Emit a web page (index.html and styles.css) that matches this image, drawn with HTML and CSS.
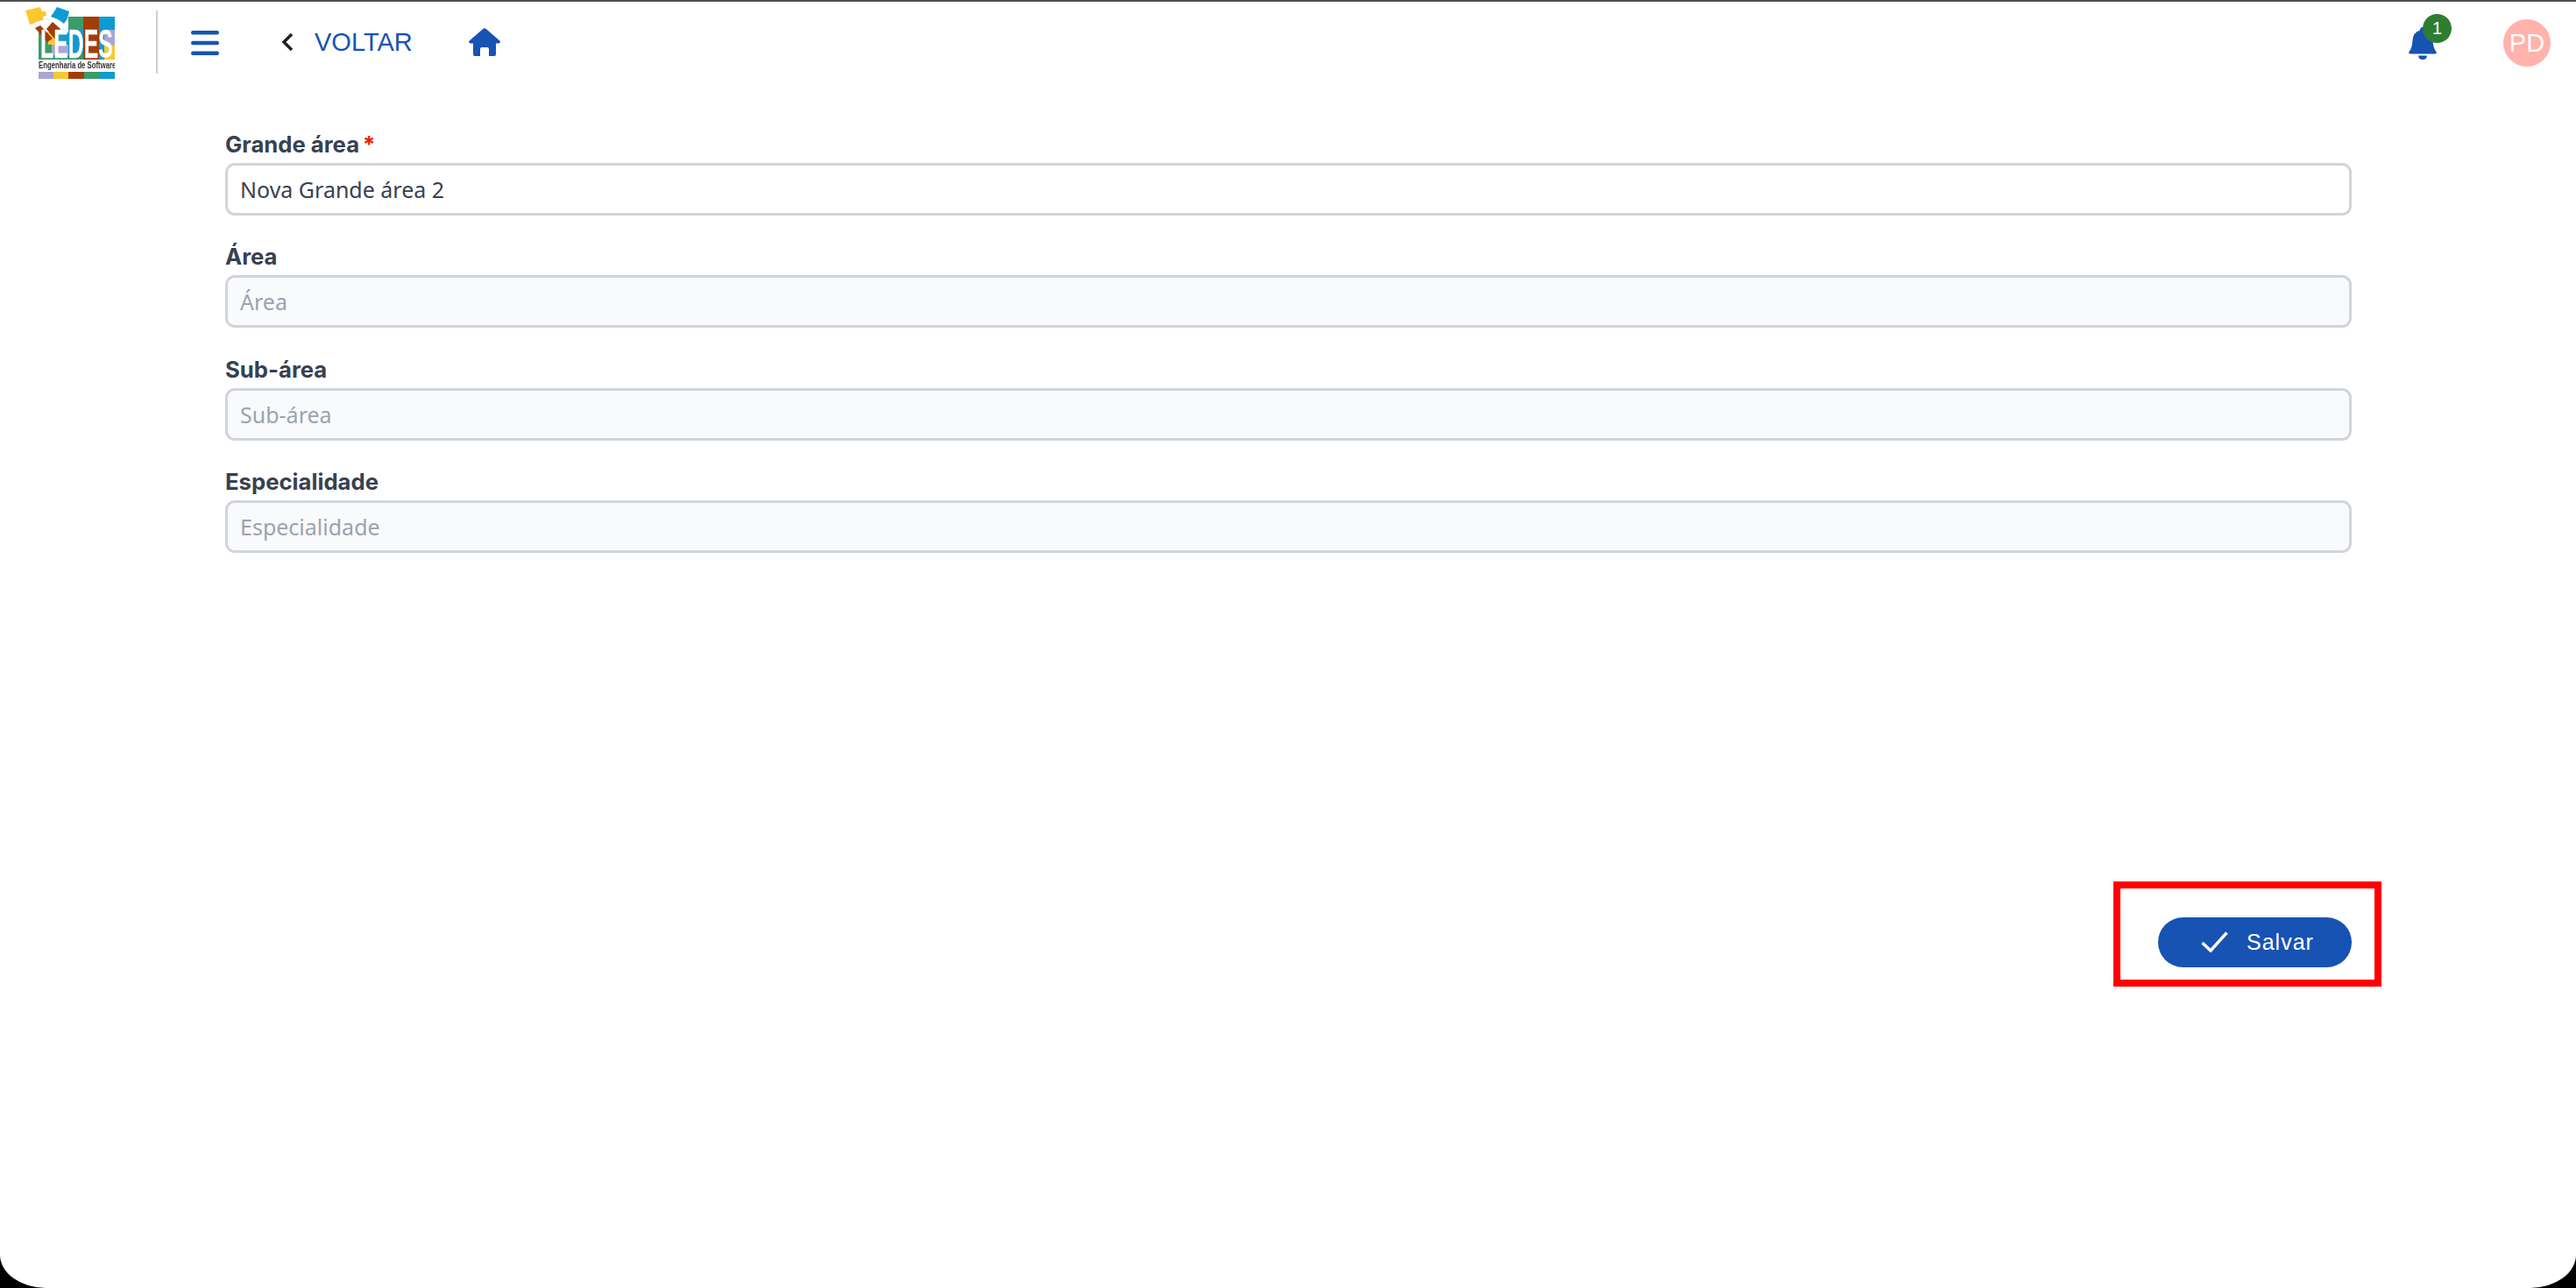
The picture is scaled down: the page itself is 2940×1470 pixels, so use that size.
FILE: index.html
```html
<!DOCTYPE html>
<html lang="pt-BR">
  <head>
    <meta charset="UTF-8" />
    <title>Grande área</title>
    <link rel="stylesheet" href="styles.css">
  </head>
  <body>
    <div class="screen">
      <header class="topbar">
        <svg class="logo" viewBox="0 0 102 82" aria-label="LEDES">
          <g class="logo-art">
            <rect x="15" y="11" width="87" height="50" fill="#3a9b6b" />
            <rect x="15" y="11" width="34" height="18" fill="#fff" />
            <rect x="26" y="29" width="12" height="14" fill="#f9c82f" />
            <rect x="38" y="29" width="11" height="14" fill="#0e9bd3" />
            <rect x="30" y="43" width="20" height="12" fill="#a9a6d6" />
            <rect x="66" y="11" width="18" height="50" fill="#a33c08" />
            <rect x="84" y="11" width="18" height="50" fill="#0e9bd3" />
            <rect x="49" y="26" width="17" height="28" fill="#0e9bd3" />
            <rect x="90" y="26" width="12" height="18" fill="#a9a6d6" />
            <rect x="90" y="44" width="12" height="17" fill="#f9c82f" />
            <path d="M0 4 L17 0 L19 5 L23 5 L24 10 L20 11 L21 16 L5 20 Z" fill="#f9c82f" />
            <path d="M33 5 L36 0 L50 5 L49 9 L48 13 L44 19 L37 14 L29 11 Z" fill="#0e9bd3" />
            <path d="M10 18 L25 13 L34 22 L24 30 L14 27 Z" fill="#fff" stroke="#ddd" stroke-width=".8" />
            <path d="M24 25 L31 17 L40 25 L38 31 L33 36 Z" fill="#a33c08" />
            <path d="M11 24 L17 21 L31 36 L25 40 Z" fill="#a33c08" />
            <text class="logo-name" transform="translate(17 58) scale(.54 1)" stroke="#ddd" stroke-width=".4">LEDES</text>
            <rect x="15" y="60" width="87" height="13" fill="#fff" />
            <text class="logo-sub" transform="translate(15 70) scale(.74 1)">Engenharia de Software</text>
            <rect x="15" y="74" width="17" height="8" fill="#a9a6d6" />
            <rect x="32" y="74" width="17" height="8" fill="#f9c82f" />
            <rect x="49" y="74" width="18" height="8" fill="#a33c08" />
            <rect x="67" y="74" width="17" height="8" fill="#3a9b6b" />
            <rect x="84" y="74" width="18" height="8" fill="#0e9bd3" />
          </g>
        </svg>
        <span class="divider"></span>
        <button class="icon-btn menu-btn" aria-label="Menu">
          <svg width="32" height="28" viewBox="0 0 32 28">
            <rect y="0" width="32" height="4.5" rx="2.2" />
            <rect y="11.7" width="32" height="4.5" rx="2.2" />
            <rect y="23.5" width="32" height="4.5" rx="2.2" />
          </svg>
        </button>
        <a class="back-link" href="#">
          <svg class="back-icon" width="14" height="22" viewBox="0 0 14 22">
            <path d="M12 2 L3 11 L12 20" />
          </svg>
          VOLTAR
        </a>
        <svg class="home-icon" width="36" height="32" viewBox="0 0 36 32">
          <path d="M16.5 .7 Q18 -.3 19.5 .7 L35.3 14.5 Q37 16.8 34 17.5 L31 17.5 L31 30 Q31 32 29 32 L23 32 L23 24 Q23 22 21 22 L15 22 Q13 22 13 24 L13 32 L7 32 Q5 32 5 30 L5 17.5 L2 17.5 Q-1 16.8 .7 14.5 Z" />
        </svg>
        <div class="topbar-right">
          <div class="bell">
            <svg width="32" height="37" viewBox="0 0 32 37">
              <path d="M16 0 Q19 0 19 3.500 Q27 6 27.500 15 Q28 24 31.500 28 Q32.500 30.500 30 30.500 L2 30.500 Q-.5 30.500 .5 28 Q4 24 4.500 15 Q5 6 13 3.500 Q13 0 16 0 Z" />
              <path d="M11 32.500 L21 32.500 Q20.500 37 16 37 Q11.500 37 11 32.500 Z" />
            </svg>
            <span class="badge">1</span>
          </div>
          <span class="avatar">PD</span>
        </div>
      </header>

      <main class="content">
        <form class="area-form">
          <div class="field">
            <label for="grande">Grande área<span class="required">*</span></label>
            <input id="grande" type="text" value="Nova Grande área 2" />
          </div>
          <div class="field">
            <label for="area">Área</label>
            <input id="area" type="text" placeholder="Área" disabled />
          </div>
          <div class="field">
            <label for="sub">Sub-área</label>
            <input id="sub" type="text" placeholder="Sub-área" disabled />
          </div>
          <div class="field">
            <label for="esp">Especialidade</label>
            <input id="esp" type="text" placeholder="Especialidade" disabled />
          </div>
        </form>

        <div class="actions">
          <div class="highlight">
            <button class="save-btn" type="button">
              <svg width="31" height="24" viewBox="0 0 31 24">
                <path d="M1.500 13 L11 22 L29.500 1.500" />
              </svg>
              Salvar
            </button>
          </div>
        </div>
      </main>
    </div>
  </body>
</html>
```

FILE: styles.css
```css
* {
  box-sizing: border-box;
}
html,
body {
  margin: 0;
  height: 100%;
  background: #000;
}
body {
  font-family: "Liberation Sans", Arial, sans-serif;
  overflow: hidden;
}
.screen {
  height: 1470px;
  background: #fff;
  border-top: 2px solid #4d4f50;
  border-radius: 0 0 52px 52px / 0 0 38px 38px;
  overflow: hidden;
}

/* top bar */
.topbar {
  display: flex;
  align-items: center;
  height: 94px;
  padding: 6px 29px 0 29px;
}
.logo {
  width: 102px;
  height: 82px;
  flex: none;
  margin-top: -6px;
}
.logo-art {
  filter: blur(0.4px);
}
.logo-name {
  font-family: "Liberation Sans", sans-serif;
  font-weight: 700;
  font-size: 46px;
  fill: #fff;
}
.logo-sub {
  font-family: "Liberation Sans", sans-serif;
  font-weight: 700;
  font-size: 10.5px;
  fill: #333;
}
.divider {
  width: 2px;
  height: 72px;
  margin: -8px 38px 0 47px;
  background: #d0d0d0;
}
.icon-btn {
  padding: 0;
  border: 0;
  background: none;
  display: flex;
}
.menu-btn {
  margin-top: -7px;
}
.menu-btn svg {
  fill: #1753b3;
}
.back-link {
  display: flex;
  align-items: center;
  gap: 24px;
  margin: -8px 0 0 71px;
  font-size: 29px;
  color: #1753b3;
  text-decoration: none;
}
.back-icon {
  fill: none;
  stroke: #222;
  stroke-width: 3.500;
}
.home-icon {
  margin: -8px 0 0 64px;
  fill: #1753b3;
}
.topbar-right {
  display: flex;
  align-items: center;
  margin-left: auto;
  margin-top: -7px;
}
.bell {
  position: relative;
  display: flex;
  margin: 1px 76px 0 0;
}
.bell svg {
  fill: #1753b3;
}
.badge {
  position: absolute;
  top: -15px;
  left: 16px;
  width: 33px;
  height: 33px;
  border-radius: 50%;
  background: #2e7d32;
  color: #fff;
  font-size: 20px;
  line-height: 33px;
  text-align: center;
}
.avatar {
  width: 54px;
  height: 54px;
  border-radius: 50%;
  background: #ffb3ab;
  color: #fff;
  font-size: 29px;
  line-height: 54px;
  text-align: center;
}

/* form */
.content {
  padding: 50px 256px 0 257px;
}
.field {
  margin-bottom: 28.33px;
}
.field label {
  display: block;
  height: 40px;
  font-family: Inter, sans-serif;
  font-weight: 700;
  font-size: 25.7px;
  line-height: 38px;
  color: #374151;
}
.required {
  margin-left: 4px;
  color: #f01e00;
}
.field input {
  display: block;
  width: 100%;
  height: 60px;
  padding: 0 14px;
  border: 3px solid #d1d5db;
  border-radius: 11px;
  background: #fff;
  font-family: "Noto Sans", sans-serif;
  font-size: 25px;
  color: #374151;
  outline: none;
}
.field input:disabled {
  background: #f9fafb;
}
.field input::placeholder {
  color: #9ca3af;
  opacity: 1;
}

/* save button */
.actions {
  display: flex;
  justify-content: flex-end;
  margin: 416px -34px 0 0;
}
.highlight {
  padding: 33px 26px 14px 43px;
  border: 8px solid #f00;
  margin-top: -41px;
}
.save-btn {
  display: flex;
  align-items: center;
  gap: 21px;
  width: 221px;
  height: 57px;
  padding: 0 0 0 49px;
  border: 0;
  border-radius: 29px;
  background: #1753b3;
  color: #fff;
  font-family: "Liberation Sans", sans-serif;
  font-size: 25px;
  letter-spacing: 1px;
}
.save-btn svg {
  fill: none;
  stroke: #fff;
  stroke-width: 3.500;
}
```
